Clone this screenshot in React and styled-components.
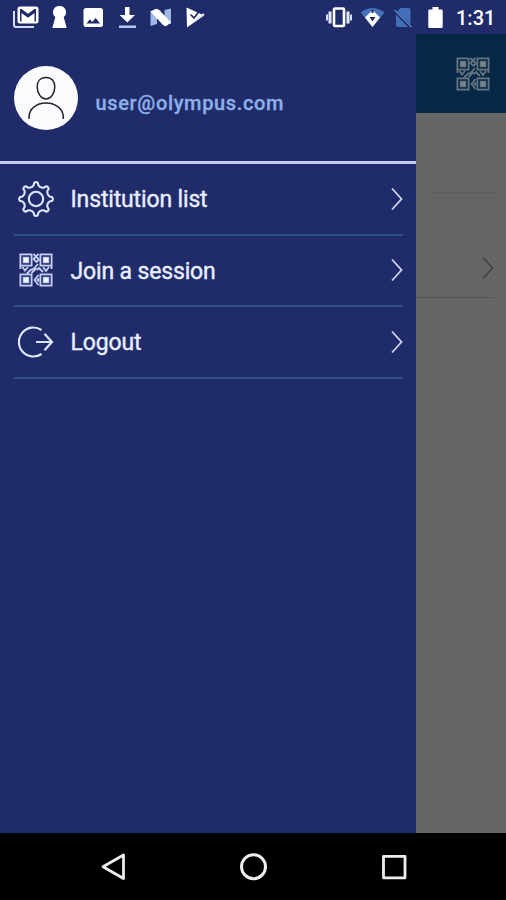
import styled, { createGlobalStyle } from 'styled-components';

const GlobalStyle = createGlobalStyle`
  * {
    box-sizing: border-box;
  }

  body {
    margin: 0;
    background-color: #666666;
    font-family: Roboto, 'Liberation Sans', sans-serif;
  }
`;

// eight teeth round a 36x36 box
const gearPath = () => {
  const point = (radius, deg) => {
    const a = (deg * Math.PI) / 180;
    return `${(18 + radius * Math.sin(a)).toFixed(2)} ${(18 - radius * Math.cos(a)).toFixed(2)}`;
  };
  let d = `M${point(16.4, -6)}`;
  for (let i = 0; i < 8; i++) {
    const a = i * 45;
    d += `Q${point(17.4, a)} ${point(16.4, a + 6)}`;
    d += `L${point(13.9, a + 10)}`;
    d += `Q${point(11.6, a + 22.5)} ${point(13.9, a + 35)}`;
    d += `L${point(16.4, a + 39)}`;
  }
  return `${d}Z`;
};

const GearIcon = () => (
  <svg width="36" height="36" viewBox="0 0 36 36" fill="none" stroke="#dce6ff" strokeWidth="2.1" strokeLinejoin="round">
    <path d={gearPath()} />
    <circle cx="18" cy="18" r="7.2" />
  </svg>
);

const QrIcon = ({ color, fill }) => (
  <svg width="34" height="34" viewBox="0 0 34 34" fill="none" stroke={color} strokeWidth="1.8">
    <rect x="1.4" y="1.4" width="11.2" height="11.2" />
    <rect x="21.4" y="1.4" width="11.2" height="11.2" />
    <rect x="1.4" y="21.4" width="11.2" height="11.2" />
    <rect x="21.4" y="21.4" width="11.2" height="11.2" />
    <g fill={fill} strokeWidth="1.2">
      <rect x="4.4" y="4.4" width="5.2" height="5.2" />
      <rect x="24.4" y="4.4" width="5.2" height="5.2" />
      <rect x="4.4" y="24.4" width="5.2" height="5.2" />
      <rect x="24.4" y="24.4" width="5.2" height="5.2" />
    </g>
    <path d="M14.5 1l5 5M19.5 1l-5 5 3 3 3-3" />
    <path d="M1.4 13v3M3.500 14l2.500 3.500 3-3.500M24 14l3 4 3-4M32.500 13v3" />
    <path d="M8 20.500l4-4 2.500-.5 4.500-5M12.500 20l5-5M18 17l2-2 4 4" />
    <path d="M19.500 22l-4 5 4 5M20 25.500l-1.500 1.500 1.500 1.500" />
  </svg>
);

const LogoutIcon = () => (
  <svg width="36" height="34" viewBox="0 0 36 34" fill="none" stroke="#dce6ff" strokeWidth="2.2">
    <path d="M23.5 5A14.500 14.500 0 1 0 23.5 29" />
    <path d="M18 17H34M26.5 8.700l7.500 8.300-7.500 8.300" />
  </svg>
);

const UserIcon = () => (
  <svg width="64" height="64" viewBox="0 0 64 64" fill="none" stroke="#25252d" strokeWidth="1.5">
    <path d="M32 11.500c-6 0-8.800 4-8.800 9.200 0 6.800 4 12.300 8.800 12.300s8.800-5.500 8.800-12.300c0-5.200-2.800-9.200-8.800-9.200z" />
    <path d="M15 53v-2C15 43.200 22 37 32 37s17.300 6.200 17.300 14v2" />
  </svg>
);

const Chevron = ({ color }) => (
  <svg width="12" height="24" viewBox="0 0 12 24" fill="none" stroke={color} strokeWidth="1.8">
    <path d="M1 1.500L10.500 12 1 22.500" />
  </svg>
);

const LeftStatusIcons = () => (
  <svg width="220" height="34" viewBox="0 0 220 34" fill="#fff">
    <path d="M14 11v14q0 2 2 2H34" fill="none" stroke="#d5def6" strokeWidth="2" />
    <path fillRule="evenodd" d="M20 6.500h16q2.500 0 2.500 2.500v12q0 2.500-2.500 2.500H20q-2.500 0-2.500-2.500V9q0-2.500 2.500-2.500zM20 9v12.500h1.500v-8.500l6.500 4.700 6.500-4.700v8.500H36V9h-1.500l-6.500 4.700L21.500 9z" />
    <path d="M59.500 6a6.200 6.200 0 0 1 4.200 11l3 11H52.300l3-11a6.200 6.200 0 0 1 4.200-11z" />
    <path fillRule="evenodd" d="M86 8h14.500q2.500 0 2.500 2.500v14q0 2.500-2.500 2.500H86q-2.500 0-2.500-2.500v-14Q83.500 8 86 8zM86.500 23.500h13.500l-4.300-5.500-3.500 4-2.300-2.700z" />
    <path d="M125 7h4.500v8h5.500l-7.700 7.500-7.700-7.500h5.400z" />
    <path d="M119 25.500h17V28h-17z" fill="#b4c7ee" />
    <path d="M150.500 11l6.500 1v12l-6.500 2zM164.500 10l6.500-1.500V24l-6.500-2z" fill="#9db8e6" />
    <path d="M150.500 11.500l5.500-2.700q2 0 3.500 1.500L171 22.500l-5 3.700q-2-.2-3.500-1.700z" />
    <path d="M186.500 7.500l17.500 8-17 12z" />
    <path d="M190.500 14.500l3.500 3.500 7-9" fill="none" stroke="#202b6a" strokeWidth="1.700" />
    <path d="M196 19.500l8-5.500" fill="none" stroke="#e3e9fa" strokeWidth="2" />
  </svg>
);

const RightStatusIcons = () => (
  <svg width="124" height="34" viewBox="0 0 124 34" fill="#fff">
    <rect x="9" y="8.500" width="10" height="17.500" rx="1" fill="none" stroke="#fff" strokeWidth="2.600" />
    <path d="M5 11.500v12M23 11.500v12" stroke="#e3e9fa" strokeWidth="3" />
    <path d="M2 14.500v6M26 14.500v6" stroke="#d5def6" strokeWidth="2" />
    <path d="M35.500 12.500Q47.500 3.500 59.500 12.500L47.500 27z" fill="#4672b9" />
    <path d="M40 17.500L47.500 10l7.500 7.500L47.500 27z" />
    <path d="M44.500 17h6l-3 4.500zM46.500 9.500h2v3.500h-2z" fill="#202b6a" />
    <path d="M75.500 8h8q2 0 2 2v14.500L72 11.500zM71 14.500L83 27h-10q-2 0-2-2z" fill="#426fb8" />
    <path d="M69.500 10l17 17" fill="none" stroke="#5681c7" strokeWidth="1.4" />
    <path d="M107.500 7h6v2.500h3q1.200 0 1.200 1.200v16q0 1.300-1.200 1.300h-12q-1.200 0-1.200-1.300v-16q0-1.200 1.200-1.200h3z" />
  </svg>
);

const items = [
  { label: 'Institution list', icon: <GearIcon /> },
  { label: 'Join a session', icon: <QrIcon color="#c5d1f3" fill="#eef2ff" /> },
  { label: 'Logout', icon: <LogoutIcon /> },
];

const App = () => {
  return (
    <Phone>
      <GlobalStyle />
      <StatusBar>
        <LeftStatusIcons />
        <StatusRight>
          <RightStatusIcons />
          <Clock>1:31</Clock>
        </StatusRight>
      </StatusBar>

      <Main>
        <Drawer>
          <Profile>
            <Avatar>
              <UserIcon />
            </Avatar>
            <Email>user@olympus.com</Email>
          </Profile>
          <Menu>
            {items.map((item) => (
              <MenuItem key={item.label}>
                <IconSlot>{item.icon}</IconSlot>
                <Label>{item.label}</Label>
                <Chevron color="#ccd7f5" />
              </MenuItem>
            ))}
          </Menu>
        </Drawer>

        <Page>
          <AppBar>
            <QrIcon color="#667480" fill="#78838c" />
          </AppBar>
          <PageBlank />
          <PageHeading />
          <PageRow>
            <Chevron color="#424242" />
          </PageRow>
        </Page>
      </Main>

      <NavBar>
        <svg width="28" height="30" viewBox="0 0 28 30" fill="none" stroke="#eee" strokeWidth="2.8" strokeLinejoin="round">
          <path d="M24.500 3v23.500L4 14.700z" />
        </svg>
        <svg width="28" height="30" viewBox="0 0 28 30" fill="none" stroke="#eee" strokeWidth="3">
          <circle cx="13.500" cy="14.700" r="12" />
        </svg>
        <svg width="28" height="30" viewBox="0 0 28 30" fill="none" stroke="#eee" strokeWidth="2.8" strokeLinejoin="round">
          <rect x="3.500" y="4.300" width="21.500" height="21.500" />
        </svg>
      </NavBar>
    </Phone>
  );
};

const Phone = styled.div`
  display: flex;
  flex-direction: column;
  width: 506px;
  height: 900px;
  overflow: hidden;
`;

const StatusBar = styled.div`
  display: flex;
  justify-content: space-between;
  height: 34px;
  background-color: #202b6a;

  svg {
    display: block;
  }
`;

const StatusRight = styled.div`
  display: flex;
  width: 181px;
`;

const Clock = styled.span`
  margin-left: 7px;
  font-size: 20px;
  font-weight: 500;
  line-height: 36px;
  color: #fff;
`;

const Main = styled.div`
  display: flex;
  height: 799px;
`;

const Drawer = styled.div`
  width: 416px;
  background-color: #202b6a;
`;

const Profile = styled.div`
  display: flex;
  align-items: flex-start;
  height: 130px;
  padding: 32px 0 0 14px;
  border-bottom: 3px solid #c2cbee;
`;

const Avatar = styled.div`
  width: 64px;
  height: 64px;
  border-radius: 50%;
  background-color: #fafbfc;
`;

const Email = styled.span`
  margin: 25px 0 0 17.5px;
  font-size: 20px;
  font-weight: 500;
  line-height: 24px;
  letter-spacing: 0.65px;
  color: #8dafe9;
  -webkit-text-stroke: 0.3px #8dafe9;
`;

const Menu = styled.ul`
  margin: 0;
  padding: 0 13px 0 14px;
  list-style: none;
`;

const MenuItem = styled.li`
  display: flex;
  align-items: center;
  height: 71.5px;
  border-bottom: 2px solid #304f91;
`;

const IconSlot = styled.span`
  display: flex;
  justify-content: center;
  width: 43px;
`;

const Label = styled.span`
  flex: 1;
  margin-left: 13.5px;
  padding-top: 3px;
  font-size: 23px;
  line-height: 28px;
  letter-spacing: -0.15px;
  color: #e8eeff;
  -webkit-text-stroke: 0.4px #e8eeff;
`;

const Page = styled.div`
  flex: 1;
  background-color: #666666;
`;

const AppBar = styled.div`
  display: flex;
  align-items: center;
  justify-content: flex-end;
  height: 79px;
  padding-right: 16px;
  background-color: #042846;
`;

const PageBlank = styled.div`
  height: 80px;
  margin: 0 10px 0 14px;
  border-bottom: 1px solid #5c5c5c;
`;

const PageHeading = styled.div`
  height: 46px;
  background-color: #646464;
`;

const PageRow = styled.div`
  display: flex;
  align-items: center;
  justify-content: flex-end;
  height: 59px;
  margin-right: 12px;
  border-bottom: 1px solid #555;
`;

const NavBar = styled.div`
  display: flex;
  align-items: center;
  justify-content: space-between;
  height: 67px;
  padding: 0 98px 0 99px;
  background-color: #000;
`;

export default App;
